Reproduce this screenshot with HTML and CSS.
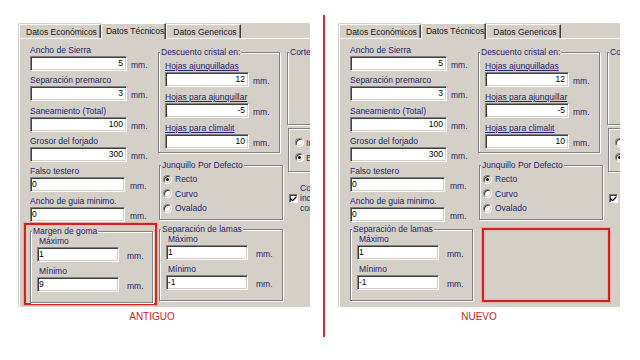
FILE: index.html
```html
<!DOCTYPE html>
<html lang="es">
<head>
<meta charset="utf-8">
<title>Datos Técnicos – antiguo y nuevo</title>
<link rel="stylesheet" href="styles.css">
</head>
<body>
<div class="stage">
  <section class="side side--old">
    <div class="panel">
      <div class="tabs">
        <div class="tab">Datos Económicos</div>
        <div class="tab tab--active">Datos Técnicos</div>
        <div class="tab">Datos Genericos</div>
      </div>
      <div class="page">
        <div class="col col--main">
          <div class="field"><div class="label">Ancho de Sierra</div><div class="row"><div class="input input--num">5</div><span class="unit">mm.</span></div></div>
          <div class="field"><div class="label">Separación premarco</div><div class="row"><div class="input input--num">3</div><span class="unit">mm.</span></div></div>
          <div class="field"><div class="label">Saneamiento (Total)</div><div class="row"><div class="input input--num">100</div><span class="unit">mm.</span></div></div>
          <div class="field"><div class="label">Grosor del forjado</div><div class="row"><div class="input input--num">300</div><span class="unit">mm.</span></div></div>
          <div class="field"><div class="label">Falso testero</div><div class="row"><div class="input input--text">0</div><span class="unit unit--text">mm.</span></div></div>
          <div class="field"><div class="label">Ancho de guia minimo.</div><div class="row"><div class="input input--text">0</div><span class="unit unit--text">mm.</span></div></div>
          <div class="highlight">
            <div class="group group--range">
              <div class="legend">Margen de goma</div>
              <div class="group__body group__body--range">
                <div class="sublabel">Máximo</div>
                <div class="row"><div class="input input--short">1</div><span class="unit unit--far">mm.</span></div>
                <div class="sublabel sublabel--next">Mínimo</div>
                <div class="row"><div class="input input--short">9</div><span class="unit unit--far">mm.</span></div>
              </div>
            </div>
          </div>
        </div>
        <div class="col col--mid">
          <div class="group group--desc">
            <div class="legend legend--desc">Descuento cristal en:</div>
            <div class="group__body group__body--desc">
              <div class="field"><div class="label label--link">Hojas ajunquilladas</div><div class="row"><div class="input input--mid">12</div><span class="unit">mm.</span></div></div>
              <div class="field"><div class="label label--link">Hojas para ajunquillar</div><div class="row"><div class="input input--mid">-5</div><span class="unit">mm.</span></div></div>
              <div class="field"><div class="label label--link">Hojas para climalit</div><div class="row"><div class="input input--mid">10</div><span class="unit">mm.</span></div></div>
            </div>
          </div>
          <div class="group group--radio">
            <div class="legend legend--radio">Junquillo Por Defecto</div>
            <div class="group__body group__body--radio">
              <div class="option"><span class="radio radio--on"></span><span class="option__text">Recto</span></div>
              <div class="option"><span class="radio"></span><span class="option__text">Curvo</span></div>
              <div class="option"><span class="radio"></span><span class="option__text">Ovalado</span></div>
            </div>
          </div>
          <div class="group group--range group--lamas">
            <div class="legend">Separación de lamas</div>
            <div class="group__body group__body--range">
              <div class="sublabel">Máximo</div>
              <div class="row"><div class="input input--short">1</div><span class="unit unit--far">mm.</span></div>
              <div class="sublabel sublabel--next">Mínimo</div>
              <div class="row"><div class="input input--short">-1</div><span class="unit unit--far">mm.</span></div>
            </div>
          </div>
        </div>
        <div class="col col--side">
          <div class="group group--cut">
            <div class="legend">Corte</div>
          </div>
          <div class="group group--side">
            <div class="group__body group__body--side">
              <div class="option option--tall"><span class="radio"></span><span class="option__text option__text--near">Interior</span></div>
              <div class="option option--tall"><span class="radio radio--on"></span><span class="option__text option__text--near">Exterior</span></div>
            </div>
          </div>
          <div class="check-row">
            <span class="check"><svg viewBox="0 0 7 7" width="7" height="7"><path d="M0.6 2.8 L2.5 4.7 L6.4 0.8 V2.7 L2.5 6.6 L0.6 4.7 Z" fill="#000"/></svg></span>
            <span class="check-row__text">Considerar<br>incremento en<br>corte</span>
          </div>
        </div>
      </div>
    </div>
    <div class="caption caption--old">ANTIGUO</div>
  </section>

  <div class="divider"></div>

  <section class="side side--new">
    <div class="panel">
      <div class="tabs">
        <div class="tab">Datos Económicos</div>
        <div class="tab tab--active">Datos Técnicos</div>
        <div class="tab">Datos Genericos</div>
      </div>
      <div class="page">
        <div class="col col--main">
          <div class="field"><div class="label">Ancho de Sierra</div><div class="row"><div class="input input--num">5</div><span class="unit">mm.</span></div></div>
          <div class="field"><div class="label">Separación premarco</div><div class="row"><div class="input input--num">3</div><span class="unit">mm.</span></div></div>
          <div class="field"><div class="label">Saneamiento (Total)</div><div class="row"><div class="input input--num">100</div><span class="unit">mm.</span></div></div>
          <div class="field"><div class="label">Grosor del forjado</div><div class="row"><div class="input input--num">300</div><span class="unit">mm.</span></div></div>
          <div class="field"><div class="label">Falso testero</div><div class="row"><div class="input input--text">0</div><span class="unit unit--text">mm.</span></div></div>
          <div class="field"><div class="label">Ancho de guia minimo.</div><div class="row"><div class="input input--text">0</div><span class="unit unit--text">mm.</span></div></div>
          <div class="group group--range group--moved">
            <div class="legend">Separación de lamas</div>
            <div class="group__body group__body--range">
              <div class="sublabel">Máximo</div>
              <div class="row"><div class="input input--short">1</div><span class="unit unit--far">mm.</span></div>
              <div class="sublabel sublabel--next">Mínimo</div>
              <div class="row"><div class="input input--short">-1</div><span class="unit unit--far">mm.</span></div>
            </div>
          </div>
        </div>
        <div class="col col--mid">
          <div class="group group--desc">
            <div class="legend legend--desc">Descuento cristal en:</div>
            <div class="group__body group__body--desc">
              <div class="field"><div class="label label--link">Hojas ajunquilladas</div><div class="row"><div class="input input--mid">12</div><span class="unit">mm.</span></div></div>
              <div class="field"><div class="label label--link">Hojas para ajunquillar</div><div class="row"><div class="input input--mid">-5</div><span class="unit">mm.</span></div></div>
              <div class="field"><div class="label label--link">Hojas para climalit</div><div class="row"><div class="input input--mid">10</div><span class="unit">mm.</span></div></div>
            </div>
          </div>
          <div class="group group--radio">
            <div class="legend legend--radio">Junquillo Por Defecto</div>
            <div class="group__body group__body--radio">
              <div class="option"><span class="radio radio--on"></span><span class="option__text">Recto</span></div>
              <div class="option"><span class="radio"></span><span class="option__text">Curvo</span></div>
              <div class="option"><span class="radio"></span><span class="option__text">Ovalado</span></div>
            </div>
          </div>
          <div class="slot"></div>
        </div>
        <div class="col col--side">
          <div class="group group--cut">
            <div class="legend">Corte</div>
          </div>
          <div class="group group--side">
            <div class="group__body group__body--side">
              <div class="option option--tall"><span class="radio"></span><span class="option__text option__text--near">Interior</span></div>
              <div class="option option--tall"><span class="radio radio--on"></span><span class="option__text option__text--near">Exterior</span></div>
            </div>
          </div>
          <div class="check-row">
            <span class="check"><svg viewBox="0 0 7 7" width="7" height="7"><path d="M0.6 2.8 L2.5 4.7 L6.4 0.8 V2.7 L2.5 6.6 L0.6 4.7 Z" fill="#000"/></svg></span>
            <span class="check-row__text">Considerar<br>incremento en<br>corte</span>
          </div>
        </div>
      </div>
    </div>
    <div class="caption">NUEVO</div>
  </section>
</div>
</body>
</html>
```

FILE: styles.css
```css
* { box-sizing: border-box; }

body {
  margin: 0;
  background: #ffffff;
  font-family: "Liberation Sans", Arial, sans-serif;
  font-size: 8.5px;
  color: #23236e;
}

.stage {
  display: flex;
  align-items: flex-start;
  padding-top: 15px;
}

.side { flex: none; padding-top: 8px; }
.side--old { margin-left: 18px; width: 292px; }
.side--new { margin-left: 13px; width: 282px; }

.divider {
  flex: none;
  width: 2px;
  height: 322px;
  margin-left: 13px;
  background: #d42a2a;
}

.caption {
  margin-top: 4px;
  font-size: 10px;
  line-height: 12px;
  color: #c81e1e;
  text-align: center;
}
.caption--old { padding-right: 24px; }

/* window panel */
.panel {
  height: 284px;
  background: #d4d0c8;
  overflow: hidden;
  display: flex;
  flex-direction: column;
}

.tabs {
  flex: none;
  display: flex;
  align-items: flex-end;
  height: 15px;
  padding-left: 1px;
}

.tab {
  height: 14px;
  padding: 1px 3px 0 6px;
  line-height: 12px;
  color: #141414;
  white-space: nowrap;
  border-top: 1px solid #ffffff;
  border-left: 1px solid #ffffff;
  border-right: 1px solid #404040;
  box-shadow: inset -1px 0 0 #808080;
}

.tab--active {
  position: relative;
  z-index: 1;
  height: 16px;
  margin-bottom: -1px;
  padding: 1px 1px 0 4px;
  background: #d4d0c8;
}

.page {
  flex: 1;
  display: flex;
  margin-left: 1px;
  border-top: 1px solid #ffffff;
  border-left: 1px solid #ffffff;
  padding-left: 10px;
}

.col { flex: none; display: flex; flex-direction: column; }
.col--main { width: 128px; padding-top: 5px; }
.col--mid { width: 129px; padding-top: 13px; }
.col--side { width: 160px; padding-top: 13px; }

/* fields */
.field { margin-bottom: 3.25px; }
.label { line-height: 12px; white-space: nowrap; }
.label--link { text-decoration: underline; }

.row { display: flex; align-items: flex-end; }

.input {
  flex: none;
  height: 15px;
  padding: 1px 3px 0 1px;
  line-height: 11px;
  background: #ffffff;
  color: #000000;
  white-space: nowrap;
  overflow: hidden;
  border: 1px solid;
  border-color: #808080 #ffffff #ffffff #808080;
  box-shadow: inset 1px 1px 0 #404040, inset -1px -1px 0 #d4d0c8;
}
.input--num { width: 97px; text-align: right; }
.input--text { width: 95px; }
.input--mid { width: 84px; text-align: right; }
.input--short { width: 82px; }

.unit { line-height: 12px; margin-left: 4px; white-space: nowrap; }
.unit--text { margin-left: 5px; }
.unit--far { margin-left: 8px; }

/* group boxes */
.group {
  flex: none;
  border: 1px solid #808080;
  box-shadow: 1px 1px 0 #ffffff, inset 1px 1px 0 #ffffff;
}

.legend {
  width: max-content;
  margin: -7px 0 -1px 1px;
  padding: 0 1px;
  line-height: 12px;
  white-space: nowrap;
  background: #d4d0c8;
}
.legend--desc { margin-bottom: 2px; }
.legend--radio { margin-bottom: 1px; }

.group--desc { width: 122px; padding-bottom: 3px; }
.group__body--desc { padding-left: 6px; }
.group--desc .field { margin-bottom: 4px; }
.group--desc .field:last-child { margin-bottom: 0; }

.group--radio { width: 124px; margin: 12px 0 0 1px; padding-bottom: 3.5px; }
.group__body--radio { padding-left: 3px; }

.group--range { width: 123px; padding-bottom: 10px; }
.group__body--range { padding-left: 6px; }
.group--lamas { width: 124px; margin: 9px 0 0 1px; }
.group--moved { margin-top: 3.5px; }

.sublabel { line-height: 11px; padding-left: 2px; white-space: nowrap; }
.sublabel--next { margin-top: 4px; }

.highlight {
  flex: none;
  width: 133px;
  margin: -2.5px 0 0 -6px;
  padding: 6px 2px 0 4px;
  border: 2px solid #d42222;
  box-shadow: 0 0 0 1px rgba(232, 140, 140, 0.55);
}

.slot {
  flex: none;
  width: 128px;
  height: 74px;
  margin: 8px 0 0 4px;
  border: 2px solid #d42222;
  box-shadow: 0 0 0 1px rgba(232, 140, 140, 0.55), inset 0 0 0 1px rgba(236, 160, 160, 0.5);
}

.group--cut { width: 150px; height: 73px; }
.group--side { width: 150px; height: 44px; margin: 3px 0 0 1px; }
.group__body--side { padding: 6px 0 0 6px; }

/* radios & checkbox */
.option { display: flex; align-items: center; height: 14.5px; }
.option--tall { height: 15px; }
.option__text { margin-left: 3px; white-space: nowrap; }
.option__text--near { margin-left: 2px; }

.radio {
  flex: none;
  width: 9px;
  height: 9px;
  border-radius: 50%;
  background: #ffffff;
  border: 1px solid;
  border-color: #808080 #ffffff #ffffff #808080;
  box-shadow: inset 1px 1px 0 #404040, inset -1px -1px 0 #d4d0c8;
  display: flex;
  align-items: center;
  justify-content: center;
}
.radio--on::after {
  content: "";
  width: 3px;
  height: 3px;
  border-radius: 50%;
  background: #000000;
}

.check-row {
  display: flex;
  align-items: center;
  margin: 11px 0 0 2px;
}
.check {
  flex: none;
  width: 9px;
  height: 9px;
  display: flex;
  background: #ffffff;
  border: 1px solid;
  border-color: #808080 #ffffff #ffffff #808080;
  box-shadow: inset 1px 1px 0 #404040;
}
.check svg { display: block; }
.check-row__text {
  margin-left: 2px;
  line-height: 10px;
  white-space: nowrap;
}
```
